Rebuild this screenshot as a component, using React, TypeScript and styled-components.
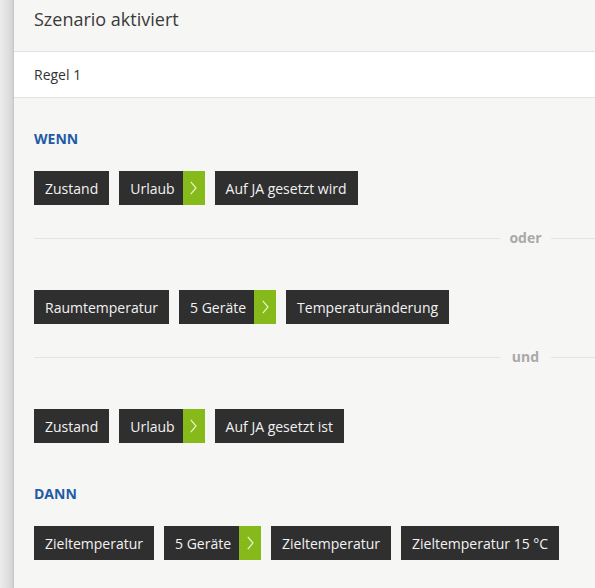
import styled, { createGlobalStyle } from 'styled-components';

const GlobalStyle = createGlobalStyle`
  body {
    margin: 0;
    font-family: 'Open Sans', 'Liberation Sans', sans-serif;
    background: #f6f6f4;
  }
`;

const Page = styled.div`
  display: flex;
  min-height: 100vh;
  width: 100vw;
  overflow: hidden;
`;

const SideStrip = styled.div`
  flex: 0 0 14px;
  background: linear-gradient(to right, #ececec, #d9d9d9 80%, #c6c6c6);
`;

const Panel = styled.section`
  flex: 1;
  display: flex;
  flex-direction: column;
  background: #f6f6f4;
`;

const Header = styled.header`
  height: 51px;
  line-height: 39px;
  padding-left: 20px;
  font-size: 18px;
  color: #3a3a3a;
  border-bottom: 1px solid #e2e2e2;
`;

const RuleRow = styled.div`
  height: 44px;
  padding-top: 1px;
  line-height: 44px;
  padding-left: 20px;
  font-size: 14px;
  color: #333333;
  background: #ffffff;
  border-bottom: 1px solid #e2e2e2;
`;

const Body = styled.div`
  padding: 31px 0 0 20px;
`;

const Section = styled.div`
  & + & {
    margin-top: 41px;
  }
`;

const Heading = styled.h3`
  margin: 0 0 22px;
  font-size: 14px;
  line-height: 20px;
  font-weight: 700;
  color: #1f5ba6;
`;

const ChipRow = styled.div`
  display: flex;
  gap: 10px;
`;

const Chip = styled.div`
  display: flex;
  height: 34px;
  background: #2f2f2f;
`;

const ChipLabel = styled.span<{ $arrow?: boolean }>`
  padding: 1px ${(p) => (p.$arrow ? '8px' : '11px')} 0 11px;
  line-height: 33px;
  font-size: 14px;
  color: #f2f2f2;
  white-space: nowrap;
`;

const ArrowBox = styled.span`
  width: 22px;
  display: flex;
  align-items: center;
  justify-content: center;
  background: #86ba1a;
`;

const Divider = styled.div`
  display: flex;
  align-items: center;
  margin: 23px 0 42px;
  height: 20px;
`;

const Line = styled.span<{ $fixed?: boolean }>`
  flex: ${(p) => (p.$fixed ? '0 0 44px' : '1')};
  height: 1px;
  background: #e3e3e3;
`;

const DividerLabel = styled.span`
  flex: 0 0 51px;
  text-align: center;
  font-size: 14px;
  font-weight: 700;
  line-height: 20px;
  color: #a9a9a9;
`;

type Item = { label: string; arrow?: boolean };

const Chevron = () => (
  <svg width="7" height="14" viewBox="0 0 7 14">
    <polyline points="0.8,0.8 6,7 0.8,13.2" fill="none" stroke="#e9f3cf" strokeWidth="1.2" />
  </svg>
);

const Row = ({ items }: { items: Item[] }) => (
  <ChipRow>
    {items.map((it, i) => (
      <Chip key={i}>
        <ChipLabel $arrow={it.arrow}>{it.label}</ChipLabel>
        {it.arrow && (
          <ArrowBox>
            <Chevron />
          </ArrowBox>
        )}
      </Chip>
    ))}
  </ChipRow>
);

const Split = ({ label }: { label: string }) => (
  <Divider>
    <Line />
    <DividerLabel>{label}</DividerLabel>
    <Line $fixed />
  </Divider>
);

export default function App() {
  return (
    <Page>
      <GlobalStyle />
      <SideStrip />
      <Panel>
        <Header>Szenario aktiviert</Header>
        <RuleRow>Regel 1</RuleRow>
        <Body>
          <Section>
            <Heading>WENN</Heading>
            <Row
              items={[
                { label: 'Zustand' },
                { label: 'Urlaub', arrow: true },
                { label: 'Auf JA gesetzt wird' },
              ]}
            />
            <Split label="oder" />
            <Row
              items={[
                { label: 'Raumtemperatur' },
                { label: '5 Geräte', arrow: true },
                { label: 'Temperaturänderung' },
              ]}
            />
            <Split label="und" />
            <Row
              items={[
                { label: 'Zustand' },
                { label: 'Urlaub', arrow: true },
                { label: 'Auf JA gesetzt ist' },
              ]}
            />
          </Section>
          <Section>
            <Heading>DANN</Heading>
            <Row
              items={[
                { label: 'Zieltemperatur' },
                { label: '5 Geräte', arrow: true },
                { label: 'Zieltemperatur' },
                { label: 'Zieltemperatur 15 °C' },
              ]}
            />
          </Section>
        </Body>
      </Panel>
    </Page>
  );
}
